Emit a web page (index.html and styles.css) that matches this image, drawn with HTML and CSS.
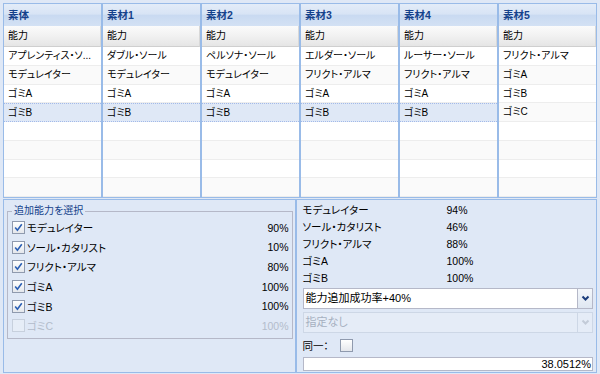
FILE: index.html
```html
<!DOCTYPE html>
<html lang="ja">
<head>
<meta charset="utf-8">
<title>能力追加</title>
<link rel="stylesheet" href="styles.css">
</head>
<body>
<div class="app">
  <div class="grids">
    <section class="gpanel">
      <div class="ghead">素体</div>
      <div class="colhead">能力</div>
      <div class="rows">
        <div class="row">アプレンティス・ソ...</div>
        <div class="row">モデュレイター</div>
        <div class="row">ゴミA</div>
        <div class="row sel">ゴミB</div>
        <div class="row"></div><div class="row"></div><div class="row"></div><div class="row"></div>
      </div>
    </section>
    <section class="gpanel">
      <div class="ghead">素材1</div>
      <div class="colhead">能力</div>
      <div class="rows">
        <div class="row">ダブル・ソール</div>
        <div class="row">モデュレイター</div>
        <div class="row">ゴミA</div>
        <div class="row sel">ゴミB</div>
        <div class="row"></div><div class="row"></div><div class="row"></div><div class="row"></div>
      </div>
    </section>
    <section class="gpanel">
      <div class="ghead">素材2</div>
      <div class="colhead">能力</div>
      <div class="rows">
        <div class="row">ペルソナ・ソール</div>
        <div class="row">モデュレイター</div>
        <div class="row">ゴミA</div>
        <div class="row sel">ゴミB</div>
        <div class="row"></div><div class="row"></div><div class="row"></div><div class="row"></div>
      </div>
    </section>
    <section class="gpanel">
      <div class="ghead">素材3</div>
      <div class="colhead">能力</div>
      <div class="rows">
        <div class="row">エルダー・ソール</div>
        <div class="row">フリクト・アルマ</div>
        <div class="row">ゴミA</div>
        <div class="row sel">ゴミB</div>
        <div class="row"></div><div class="row"></div><div class="row"></div><div class="row"></div>
      </div>
    </section>
    <section class="gpanel">
      <div class="ghead">素材4</div>
      <div class="colhead">能力</div>
      <div class="rows">
        <div class="row">ルーサー・ソール</div>
        <div class="row">フリクト・アルマ</div>
        <div class="row">ゴミA</div>
        <div class="row sel">ゴミB</div>
        <div class="row"></div><div class="row"></div><div class="row"></div><div class="row"></div>
      </div>
    </section>
    <section class="gpanel">
      <div class="ghead">素材5</div>
      <div class="colhead">能力</div>
      <div class="rows">
        <div class="row">フリクト・アルマ</div>
        <div class="row">ゴミA</div>
        <div class="row">ゴミB</div>
        <div class="row">ゴミC</div>
        <div class="row"></div><div class="row"></div><div class="row"></div><div class="row"></div>
      </div>
    </section>
  </div>

  <div class="bottom">
    <section class="lpanel">
      <fieldset class="fs">
        <legend class="legend">追加能力を選択</legend>
        <div class="chk-row"><span class="cb on"><svg viewBox="0 0 13 13" width="13" height="13"><path d="M3.2 6.6 L5.4 9.2 L9.8 3.2" fill="none" stroke="#2b5fb4" stroke-width="1.6"/></svg></span><span class="lbl">モデュレイター</span><span class="pct">90%</span></div>
        <div class="chk-row"><span class="cb on"><svg viewBox="0 0 13 13" width="13" height="13"><path d="M3.2 6.6 L5.4 9.2 L9.8 3.2" fill="none" stroke="#2b5fb4" stroke-width="1.6"/></svg></span><span class="lbl">ソール・カタリスト</span><span class="pct">10%</span></div>
        <div class="chk-row"><span class="cb on"><svg viewBox="0 0 13 13" width="13" height="13"><path d="M3.2 6.6 L5.4 9.2 L9.8 3.2" fill="none" stroke="#2b5fb4" stroke-width="1.6"/></svg></span><span class="lbl">フリクト・アルマ</span><span class="pct">80%</span></div>
        <div class="chk-row"><span class="cb on"><svg viewBox="0 0 13 13" width="13" height="13"><path d="M3.2 6.6 L5.4 9.2 L9.8 3.2" fill="none" stroke="#2b5fb4" stroke-width="1.6"/></svg></span><span class="lbl">ゴミA</span><span class="pct">100%</span></div>
        <div class="chk-row"><span class="cb on"><svg viewBox="0 0 13 13" width="13" height="13"><path d="M3.2 6.6 L5.4 9.2 L9.8 3.2" fill="none" stroke="#2b5fb4" stroke-width="1.6"/></svg></span><span class="lbl">ゴミB</span><span class="pct">100%</span></div>
        <div class="chk-row disabled"><span class="cb"></span><span class="lbl">ゴミC</span><span class="pct">100%</span></div>
      </fieldset>
    </section>
    <section class="rpanel">
      <div class="res-row"><span class="res-label">モデュレイター</span><span>94%</span></div>
      <div class="res-row"><span class="res-label">ソール・カタリスト</span><span>46%</span></div>
      <div class="res-row"><span class="res-label">フリクト・アルマ</span><span>88%</span></div>
      <div class="res-row"><span class="res-label">ゴミA</span><span>100%</span></div>
      <div class="res-row"><span class="res-label">ゴミB</span><span>100%</span></div>
      <div class="combo">
        <span class="combo-text">能力追加成功率+40%</span>
        <span class="trigger"><svg viewBox="0 0 15 19" width="15" height="19"><path d="M4.5 7.5 L7.5 10.5 L10.5 7.5" fill="none" stroke="#1c3d7c" stroke-width="2"/></svg></span>
      </div>
      <div class="combo off">
        <span class="combo-text">指定なし</span>
        <span class="trigger"><svg viewBox="0 0 15 19" width="15" height="19"><path d="M4.5 7.5 L7.5 10.5 L10.5 7.5" fill="none" stroke="#c3cbd8" stroke-width="2"/></svg></span>
      </div>
      <div class="same-row"><span class="same-lbl">同一：</span><span class="cb"></span></div>
      <div class="result">38.0512%</div>
    </section>
  </div>
</div>
</body>
</html>
```

FILE: styles.css
```css
* { box-sizing: border-box; }

body {
  margin: 0;
  background: #dfe8f6;
  font-family: Tahoma, "Liberation Sans", "Noto Sans CJK JP", sans-serif;
  font-size: 11px;
  font-feature-settings: "palt";
  color: #000;
}

.app {
  width: 600px;
  height: 374px;
  padding: 3px 3px 1px 3px;
  display: flex;
  flex-direction: column;
  gap: 1px;
}

.grids {
  display: flex;
  height: 195px;
}

.gpanel {
  flex: 1;
  min-width: 0;
  border: 1px solid #99bbe8;
  background: #fff;
  display: flex;
  flex-direction: column;
  overflow: hidden;
}

.ghead {
  height: 22px;
  line-height: 22px;
  padding-left: 4px;
  font-weight: bold;
  color: #15428b;
  font-size: 10.5px;
  background: linear-gradient(to bottom, #e3ecf8 0%, #d8e4f5 45%, #c9daf1 52%, #d3e1f4 100%);
}

.colhead {
  height: 21px;
  line-height: 20px;
  padding-left: 4px;
  font-size: 10px;
  background: linear-gradient(to bottom, #fbfbfb 0%, #f1f1f1 50%, #e5e5e5 100%);
  border-bottom: 1px solid #cfcfcf;
  border-right: 1px solid #d8d8d8;
}

.rows {
  flex: 1;
  display: flex;
  flex-direction: column;
}

.row {
  height: 18.75px;
  line-height: 18px;
  padding: 0 4px;
  font-size: 10px;
  border-bottom: 1px solid #ededed;
  white-space: nowrap;
  overflow: hidden;
}

.row:nth-child(even) { background: #fafafa; }

.row.sel {
  background: #dfe8f6;
  border-top: 1px dotted #a3bae9;
  border-bottom: 1px dotted #a3bae9;
}

.bottom {
  flex: 1;
  display: flex;
}

.lpanel, .rpanel {
  flex: 1;
  min-width: 0;
  border: 1px solid #99bbe8;
  background: #dfe8f6;
}

.fs {
  margin: 4px 2px 0 3px;
  padding: 0 3px 2px 4px;
  border: 1px solid #b5b8c8;
  border-radius: 0;
  min-width: 0;
  font-size: 10.5px;
}

.legend {
  padding: 0 2px;
  margin-left: 0;
  line-height: 14px;
  font-size: 10px;
  color: #15428b;
}

.chk-row {
  display: flex;
  align-items: center;
  height: 19.6px;
}

.cb {
  width: 13px;
  height: 13px;
  flex: none;
  border: 1px solid #8f9aae;
  background: linear-gradient(to bottom, #ffffff, #e4e7ec);
  position: relative;
  display: inline-block;
}

.cb svg {
  position: absolute;
  left: -1px;
  top: -1px;
}

.lbl { margin-left: 2px; }

.pct { margin-left: auto; }

.chk-row.disabled { color: #b3bccb; }
.chk-row.disabled .cb {
  border-color: #c7d0dd;
  background: #e6edf7;
}

.rpanel {
  padding: 2px 3px 0 6px;
  font-size: 10.5px;
}

.res-row {
  display: flex;
  height: 17px;
  line-height: 17px;
}

.res-label { width: 144px; }

.combo {
  margin-top: 1px;
  height: 21px;
  display: flex;
  align-items: stretch;
  border: 1px solid #b5b8c8;
  background: #fff;
  font-size: 11px;
}

.combo-text {
  flex: 1;
  padding-left: 2px;
  line-height: 19px;
}

.trigger {
  width: 15px;
  border-left: 1px solid #b5b8c8;
  background: linear-gradient(to bottom, #f4f7fb, #dfe7f2);
}

.combo.off {
  margin-top: 3px;
  border-color: #cdd7e6;
  background: #e5ecf7;
  color: #a6b0c0;
}

.combo.off .trigger {
  border-left-color: #cdd7e6;
  background: #e5ecf7;
}

.same-row {
  display: flex;
  align-items: center;
  height: 23px;
  margin-top: 1px;
}

.same-lbl { width: 37px; }

.same-row .cb { border-color: #8f9aae; }

.result {
  height: 14px;
  line-height: 12px;
  border: 1px solid #b5b8c8;
  background: #fff;
  text-align: right;
  padding-right: 1px;
  font-size: 11px;
}
```
